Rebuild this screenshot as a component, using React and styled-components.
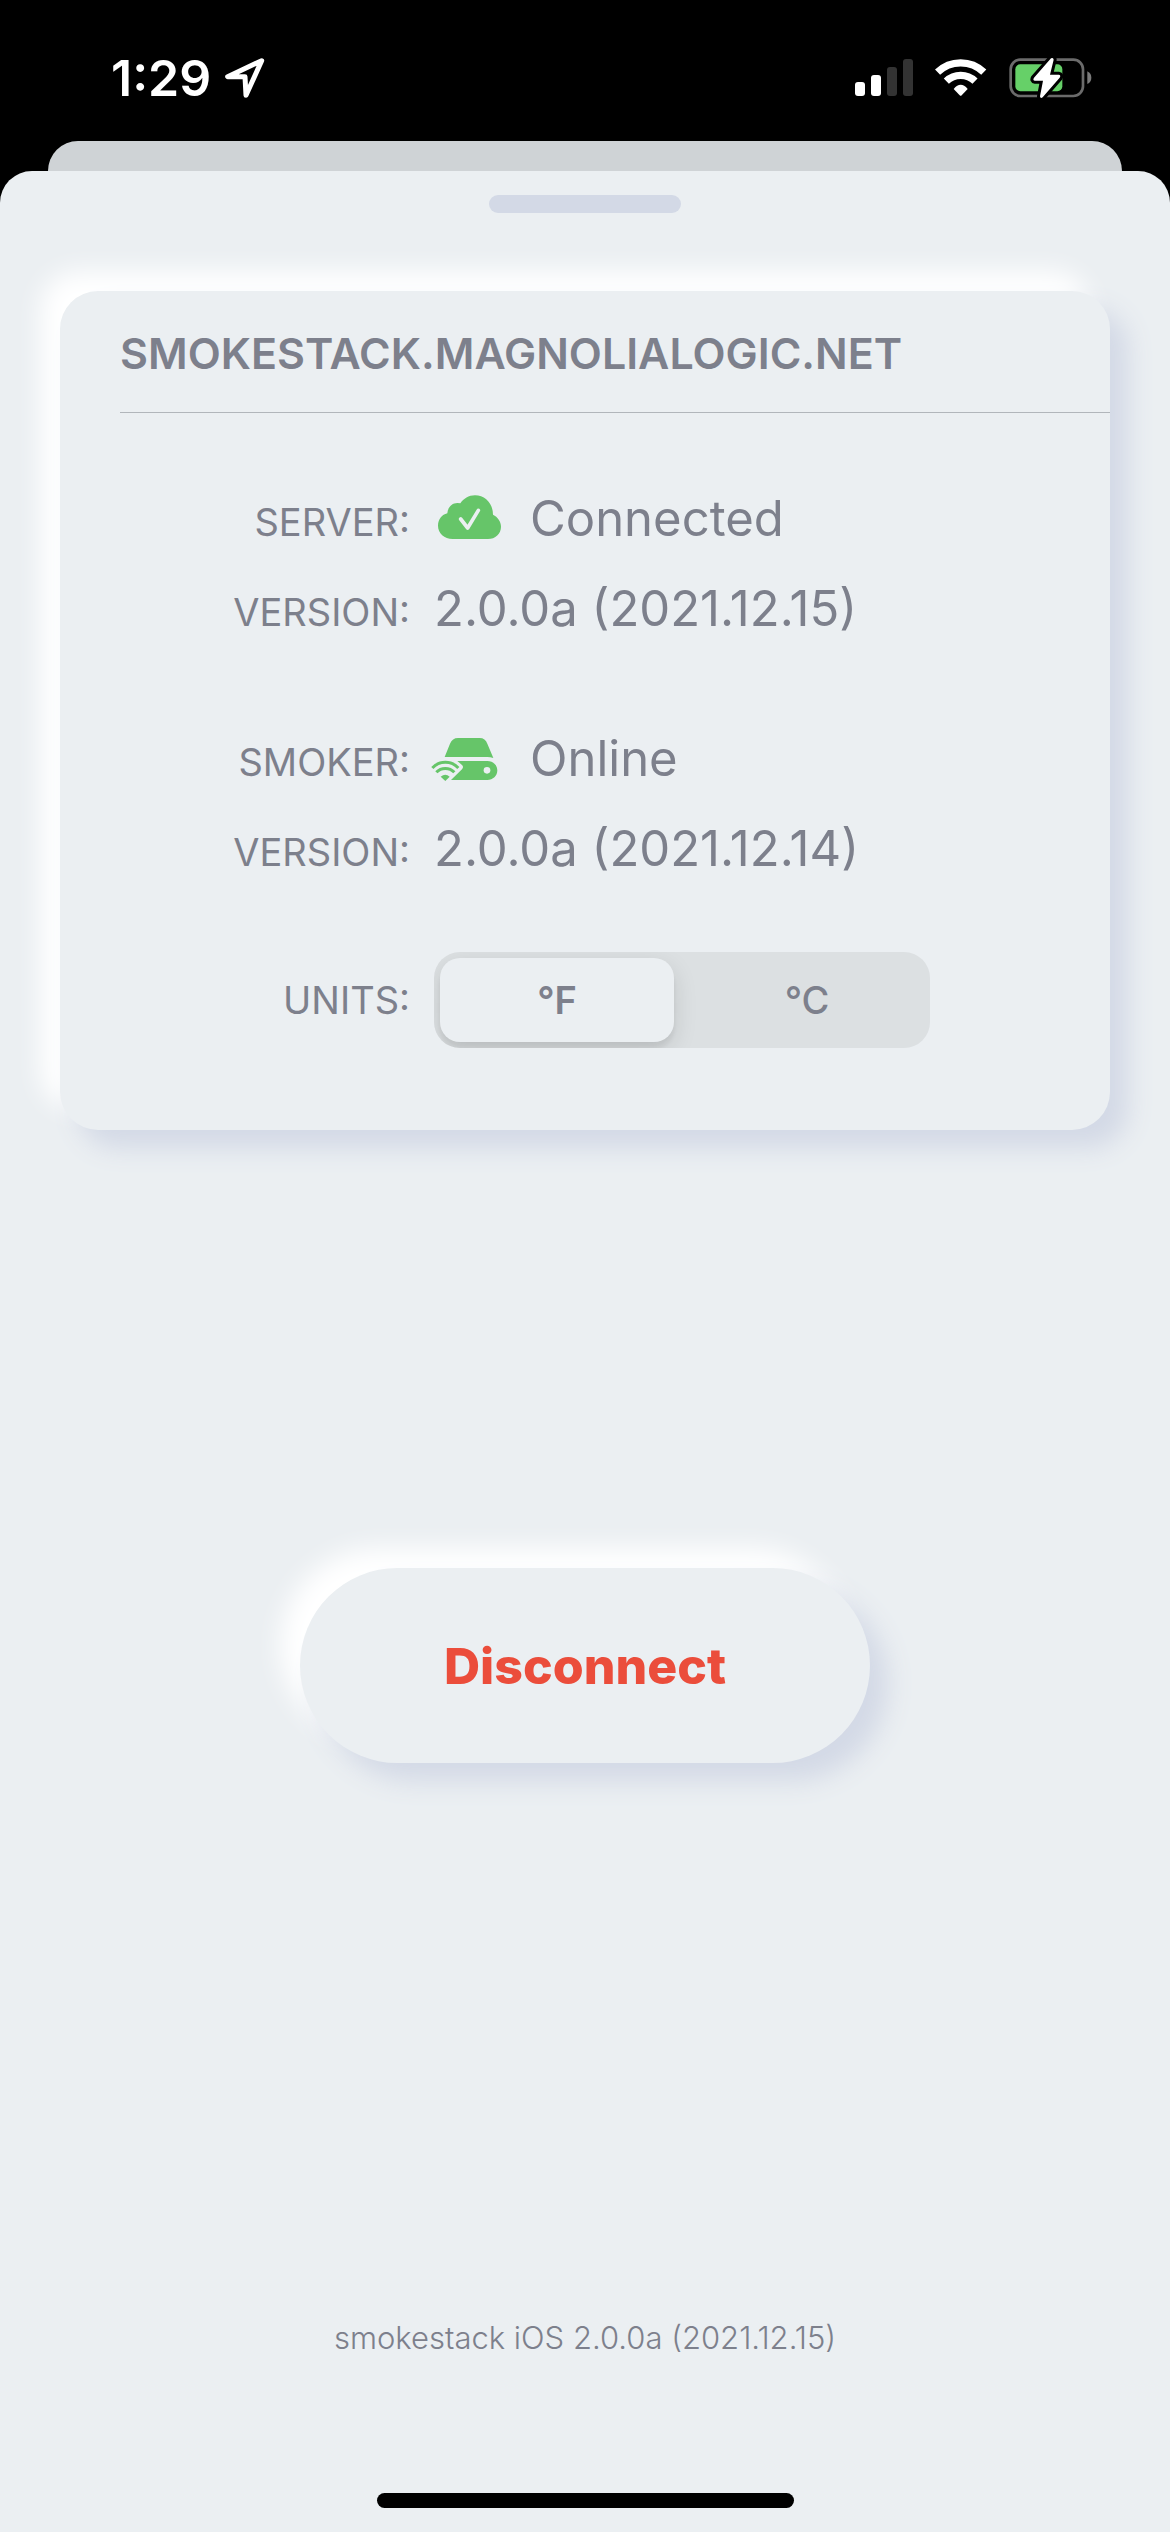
import React, { useState } from "react";
import styled, { createGlobalStyle } from "styled-components";

const color = {
  surface: "#ebeff2",
  text: "#7d808c",
  green: "#66c569",
  lavender: "#d3d9e6",
  red: "#eb4d3b",
};

const GlobalStyle = createGlobalStyle`
  *, *::before, *::after { box-sizing: border-box; }
  body {
    margin: 0;
    background: #000;
    color: ${color.text};
    font-family: Inter, "Liberation Sans", sans-serif;
  }
`;

const Screen = styled.div`
  display: flex;
  flex-direction: column;
  min-height: 100vh;
`;

const StatusBar = styled.header`
  display: flex;
  align-items: center;
  justify-content: space-between;
  height: 141px;
  padding: 14px 78px 0 111px;
  color: #fff;
`;

const StatusGroup = styled.div`
  display: flex;
  align-items: center;
  gap: ${(p) => p.$gap}px;
  height: 60px;
`;

const Time = styled.time`
  font-size: 50px;
  font-weight: 600;
  line-height: 60px;
`;

const SheetBehind = styled.div`
  height: 30px;
  margin: 0 48px;
  border-radius: 30px 30px 0 0;
  background: #cfd3d6;
`;

const Sheet = styled.main`
  display: flex;
  flex: 1;
  flex-direction: column;
  align-items: center;
  padding: 24px 60px;
  border-radius: 32px 32px 0 0;
  background: ${color.surface};
`;

const Grabber = styled.div`
  width: 192px;
  height: 18px;
  border-radius: 9px;
  background: ${color.lavender};
`;

const raised = `
  background: ${color.surface};
  box-shadow: 18px 18px 26px ${color.lavender}, -20px -20px 26px #fff;
`;

const Card = styled.section`
  align-self: stretch;
  margin-top: 78px;
  padding: 0 0 82px 60px;
  border-radius: 38px;
  ${raised}
`;

const CardTitle = styled.h1`
  margin: 0;
  padding: 34px 0 30px;
  border-bottom: 1px solid #b1b6bb;
  font-size: 43px;
  font-weight: 600;
  line-height: 57px;
`;

const Details = styled.dl`
  display: flex;
  flex-direction: column;
  gap: 30px;
  margin: 0;
  padding-top: ${(p) => p.$top}px;
`;

const Row = styled.div`
  display: flex;
  align-items: ${(p) => p.$align || "baseline"};
  gap: 24px;
`;

const Label = styled.dt`
  flex: none;
  width: 290px;
  font-size: 38px;
  line-height: 48px;
  text-align: right;
`;

const Value = styled.dd`
  display: flex;
  align-items: center;
  gap: 30px;
  margin: 0;
  font-size: 49px;
  line-height: 60px;
`;

const ValueText = styled.span`
  align-self: baseline;
`;

const StateIcon = styled.svg`
  width: 66px;
  height: 48px;
  overflow: visible;
  fill: ${color.green};
`;

const UnitsRow = styled(Row)`
  padding-top: 73px;
`;

const Segments = styled.div`
  display: grid;
  grid-template-columns: 1fr 1fr;
  gap: 16px;
  width: 496px;
  height: 96px;
  padding: 6px;
  overflow: hidden;
  border-radius: 26px;
  background: #dce0e2;
`;

const Segment = styled.label`
  display: flex;
  align-items: center;
  justify-content: center;
  border-radius: 20px;
  font-size: 38px;
  font-weight: 500;
  cursor: pointer;

  &:has(input:checked) {
    background: ${color.surface};
    box-shadow: 0 8px 24px rgba(0, 0, 0, 0.12), 0 6px 4px rgba(0, 0, 0, 0.05);
    font-weight: 600;
  }
`;

const HiddenRadio = styled.input`
  appearance: none;
  width: 0;
  height: 0;
  margin: 0;
`;

const DisconnectButton = styled.button`
  width: 570px;
  height: 195px;
  margin-top: 438px;
  border: 0;
  border-radius: 98px;
  color: ${color.red};
  font: 800 50px/60px Inter, "Liberation Sans", sans-serif;
  cursor: pointer;
  ${raised}
`;

const AppVersion = styled.footer`
  margin-top: auto;
  padding-top: 60px;
  font-size: 31px;
  font-weight: 300;
  line-height: 36px;
`;

const HomeIndicator = styled.div`
  width: 417px;
  height: 15px;
  margin-top: 137px;
  border-radius: 8px;
  background: #000;
`;

const LocationIcon = () => (
  <svg width="40" height="40" viewBox="441 85 120 120" fill="none" stroke="#fff" strokeWidth="15" strokeLinejoin="round" aria-hidden="true">
    <path d="M551 93L449 141H501L504 197Z" />
  </svg>
);

const SignalIcon = () => (
  <svg width="58" height="38" viewBox="0 0 58 38" fill="#fff" aria-hidden="true">
    <rect x="0" y="23" width="10" height="14" rx="3" />
    <rect x="16" y="16" width="10" height="21" rx="3" />
    <rect x="32" y="8" width="10" height="29" rx="3" fill="#333" />
    <rect x="48" y="0" width="10" height="37" rx="3" fill="#333" />
  </svg>
);

const WifiIcon = () => (
  <svg width="52" height="38" viewBox="318 57 156 114" fill="none" stroke="#fff" aria-hidden="true">
    <path d="M325.700 96.300A100 100 0 0 1 464.300 96.300" strokeWidth="22" />
    <path d="M352 123.500A62 62 0 0 1 438 123.500" strokeWidth="22" />
    <path d="M374 147Q395 122 416 147L398 166Q395 169 392 166Z" fill="#fff" stroke="none" />
  </svg>
);

const BatteryIcon = () => (
  <svg width="83" height="42" viewBox="536 50 249 126" aria-hidden="true">
    <rect x="541" y="58" width="217" height="109" rx="29" fill="none" stroke="#6b6b6b" strokeWidth="8" />
    <path d="M771 93Q783 99 783 112T771 131Z" fill="#7b7b7b" />
    <rect x="555" y="72" width="141" height="81" rx="15" fill="#66d068" />
    <path
      d="M662 54L611 112Q606 120 614 121H638L629 168Q630 176 637 171L688 112Q693 104 685 103H659L670 58Q669 50 662 54Z"
      fill="#fff"
      stroke="#000"
      strokeWidth="18"
      paintOrder="stroke"
      strokeLinejoin="round"
    />
  </svg>
);

const CloudCheckIcon = () => (
  <StateIcon viewBox="102 75 198 144" aria-hidden="true">
    <path d="M158 207C133 207 114 189 114 167C114 148 126 134 142 130C143 112 156 99 172 99Q177 99 181 100C191 86 206 76 225 76C255 76 279 100 279 134C293 141 303 154 303 170C303 191 286 207 264 207Z" />
    <path d="M182 147L203 174L235 121" fill="none" stroke={color.surface} strokeWidth="11" strokeLinecap="round" strokeLinejoin="round" />
  </StateIcon>
);

const DriveWifiIcon = () => (
  <StateIcon viewBox="102 105 198 144" aria-hidden="true">
    <path d="M134 171L150 131Q157 114 174 114H239Q256 114 262 131L280 174Q271 171 262 171Z" />
    <path d="M172 183H262C279 183 292 195 292 211C292 228 279 240 262 240H153L186 208Q192 201 186 195Z" />
    <circle cx="261" cy="211" r="10" fill={color.surface} />
    <path d="M97 204A53 53 0 0 1 175 204M109 217A37 37 0 0 1 163 217" fill="none" stroke={color.green} strokeWidth="9" />
    <path d="M122 230Q136 219 149 230L136 243Z" />
  </StateIcon>
);

function DetailRow({ label, icon, children }) {
  return (
    <Row>
      <Label>{label}:</Label>
      <Value>
        {icon}
        <ValueText>{children}</ValueText>
      </Value>
    </Row>
  );
}

function UnitPicker() {
  const [unit, setUnit] = useState("°F");
  return (
    <Segments role="radiogroup" aria-labelledby="units-label">
      {["°F", "°C"].map((name) => (
        <Segment key={name}>
          <HiddenRadio type="radio" name="units" value={name} checked={unit === name} onChange={() => setUnit(name)} />
          {name}
        </Segment>
      ))}
    </Segments>
  );
}

export default function App() {
  return (
    <Screen>
      <GlobalStyle />
      <StatusBar>
        <StatusGroup $gap={14}>
          <Time>1:29</Time>
          <LocationIcon />
        </StatusGroup>
        <StatusGroup $gap={22}>
          <SignalIcon />
          <WifiIcon />
          <BatteryIcon />
        </StatusGroup>
      </StatusBar>
      <SheetBehind />
      <Sheet>
        <Grabber />
        <Card>
          <CardTitle>SMOKESTACK.MAGNOLIALOGIC.NET</CardTitle>
          <Details $top={76}>
            <DetailRow label="SERVER" icon={<CloudCheckIcon />}>Connected</DetailRow>
            <DetailRow label="VERSION">2.0.0a (2021.12.15)</DetailRow>
          </Details>
          <Details $top={90}>
            <DetailRow label="SMOKER" icon={<DriveWifiIcon />}>Online</DetailRow>
            <DetailRow label="VERSION">2.0.0a (2021.12.14)</DetailRow>
          </Details>
          <UnitsRow $align="center">
            <Label as="span" id="units-label">UNITS:</Label>
            <UnitPicker />
          </UnitsRow>
        </Card>
        <DisconnectButton type="button">Disconnect</DisconnectButton>
        <AppVersion>smokestack iOS 2.0.0a (2021.12.15)</AppVersion>
        <HomeIndicator />
      </Sheet>
    </Screen>
  );
}
